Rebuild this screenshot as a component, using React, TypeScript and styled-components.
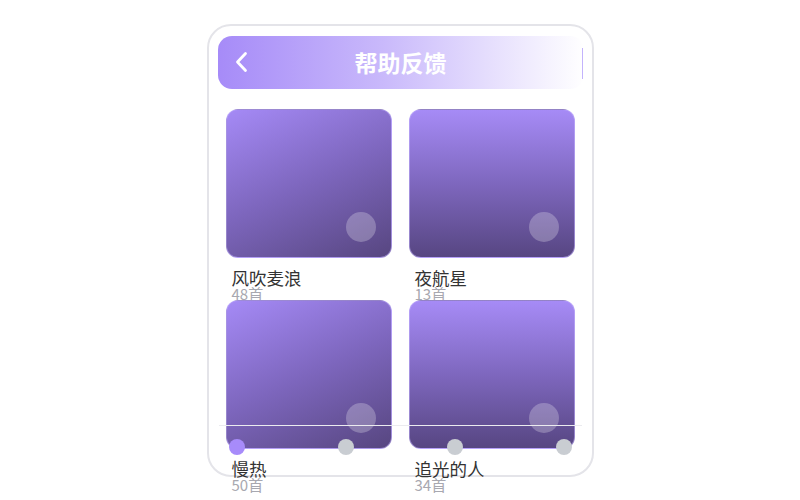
import React from "react";
import styled, { createGlobalStyle } from "styled-components";

const GlobalStyle = createGlobalStyle`
  * { box-sizing: border-box; }
  html, body { margin: 0; padding: 0; background: #ffffff; }
  body {
    font-family: "Noto Sans CJK SC", "Noto Sans", "Liberation Sans", sans-serif;
    width: 800px;
    height: 500px;
    overflow: hidden;
  }
`;

const Stage = styled.div`
  width: 800px;
  height: 500px;
  display: flex;
  align-items: center;
  justify-content: center;
`;

const Phone = styled.div`
  position: relative;
  width: 387px;
  height: 453px;
  border: 2px solid #e4e4e9;
  border-radius: 24px;
  background: #ffffff;
  padding: 10px 8px 0 9px;
  display: flex;
  flex-direction: column;
`;

const Header = styled.div`
  height: 53px;
  border-radius: 14px;
  background: linear-gradient(90deg, #a68bf8 0%, #c9b9fb 45%, #ffffff 100%);
  display: grid;
  grid-template-columns: 48px 1fr 48px;
  align-items: center;
`;

const BackButton = styled.button`
  border: none;
  background: transparent;
  padding: 0 0 0 16px;
  height: 100%;
  display: flex;
  align-items: center;
  cursor: pointer;
`;

const Title = styled.h1`
  margin: 0;
  text-align: center;
  color: #ffffff;
  font-size: 23px;
  font-weight: 700;
  letter-spacing: 0;
  line-height: 53px;
`;

const HeaderEnd = styled.div`
  height: 100%;
  display: flex;
  justify-content: flex-end;
  align-items: center;
  padding: 3px 1px 0 0;
`;

const Divider = styled.span`
  width: 1px;
  height: 31px;
  background: #c3b3fc;
`;

const Grid = styled.div`
  margin: 20px 8px 0 8px;
  display: grid;
  grid-template-columns: 166px 166px;
  column-gap: 17px;
  row-gap: 0;
`;

const Item = styled.div`
  display: flex;
  flex-direction: column;
  height: 191px;
`;

const Cover = styled.div<{ $diag: boolean }>`
  position: relative;
  width: 166px;
  height: 149px;
  border-radius: 12px;
  border: 1px solid rgba(196, 181, 253, 0.55);
  background: ${(p) =>
    p.$diag
      ? "linear-gradient(155deg, #a58af6 0%, #7d66bd 50%, #574680 100%)"
      : "linear-gradient(180deg, #a68bf6 0%, #7e67be 50%, #574682 100%)"};
`;

const PlayDot = styled.span`
  position: absolute;
  right: 15px;
  bottom: 15px;
  width: 30px;
  height: 30px;
  border-radius: 50%;
  background: rgba(255, 255, 255, 0.25);
`;

const Name = styled.div`
  margin: 10px 0 0 6px;
  font-size: 17.5px;
  line-height: 20px;
  color: #333333;
`;

const Count = styled.div`
  margin-left: 6px;
  font-size: 15px;
  line-height: 12px;
  color: #a8a8b0;
`;

const Indicator = styled.div`
  position: absolute;
  left: 10px;
  right: 10px;
  top: 399px;
  border-top: 1px solid #ebebef;
  padding: 13px 10px 0 10px;
  display: flex;
  justify-content: space-between;
  align-items: center;
`;

const Step = styled.span<{ $active: boolean }>`
  width: 16px;
  height: 16px;
  border-radius: 50%;
  background: ${(p) => (p.$active ? "#a78bfa" : "#c9cdd2")};
`;

const playlists = [
  { name: "风吹麦浪", count: 48 },
  { name: "夜航星", count: 13 },
  { name: "慢热", count: 50 },
  { name: "追光的人", count: 34 },
];

export default function App() {
  return (
    <>
      <GlobalStyle />
      <Stage>
        <Phone>
          <Header>
            <BackButton aria-label="返回">
              <svg width="14" height="22" viewBox="0 0 14 22" fill="none">
                <path
                  d="M11.5 2.5 L3.5 11 L11.5 19.5"
                  stroke="#ffffff"
                  strokeWidth="2.8"
                  strokeLinecap="round"
                  strokeLinejoin="round"
                />
              </svg>
            </BackButton>
            <Title>帮助反馈</Title>
            <HeaderEnd>
              <Divider />
            </HeaderEnd>
          </Header>
          <Grid>
            {playlists.map((p, i) => (
              <Item key={p.name}>
                <Cover $diag={i % 2 === 0}>
                  <PlayDot />
                </Cover>
                <Name>{p.name}</Name>
                <Count>{p.count}首</Count>
              </Item>
            ))}
          </Grid>
          <Indicator>
            {[0, 1, 2, 3].map((i) => (
              <Step key={i} $active={i === 0} />
            ))}
          </Indicator>
        </Phone>
      </Stage>
    </>
  );
}
